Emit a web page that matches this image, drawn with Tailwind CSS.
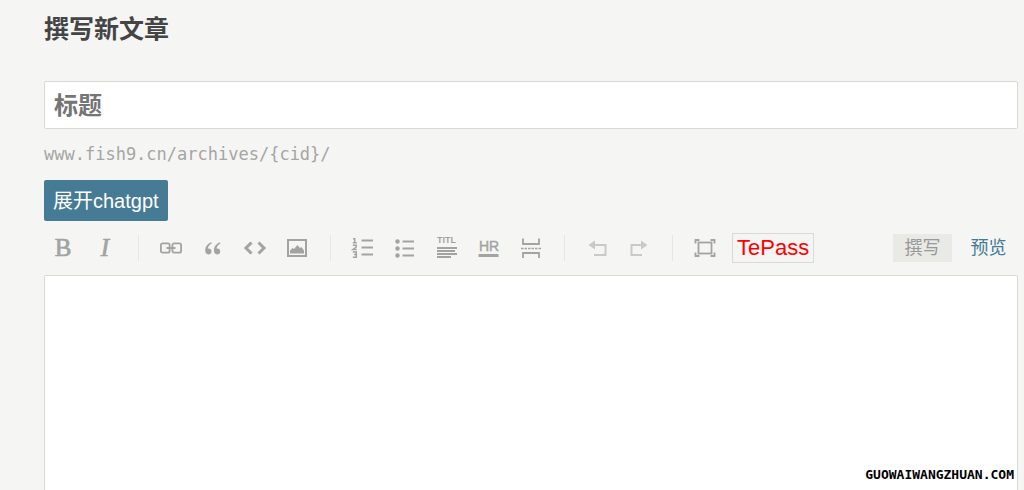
<!DOCTYPE html>
<html lang="zh-CN">
<head>
    <meta charset="UTF-8">
    <meta name="viewport" content="width=device-width, initial-scale=1.0">
    <title>撰写新文章</title>
    <script src="https://cdn.jsdelivr.net/npm/@tailwindcss/browser@4"></script>
</head>
<body class="bg-[#f5f5f3] font-['Liberation_Sans','Noto_Sans_CJK_SC',sans-serif]">
    <main class="relative flex flex-col h-screen overflow-hidden pl-11 pr-1.5 pt-3">
        <h1 class="text-[25px] leading-[34px] font-bold text-[#444]">撰写新文章</h1>

        <form class="flex flex-col flex-1 mt-[35px]">
            <input id="title" type="text" aria-label="标题" placeholder="标题" class="w-full h-12 px-[9px] pt-0.5 bg-white border border-[#d9d9d6] rounded-xs text-2xl font-bold placeholder:text-[#757575]">

            <p class="mt-3 text-[17px] leading-[26px] text-[#a5a5a3] font-['DejaVu_Sans_Mono',monospace]">www.fish9.cn/archives/{cid}/</p>

            <div class="mt-[13px]">
                <button type="button" class="h-[41px] px-[9px] bg-[#467b96] rounded-xs text-xl leading-6 text-white">展开chatgpt</button>
            </div>

            <div class="flex items-center justify-between mt-3 h-[30px]">
                <div class="flex items-center gap-1 text-[#a3a3a1]">
                    <button type="button" title="加粗" class="flex justify-center w-[38px]">
                        <svg class="w-6 h-6 font-['Liberation_Serif',serif]" viewBox="0 0 24 24" fill="currentColor" stroke="currentColor" stroke-width=".7" text-anchor="middle">
                            <text x="12" y="20" font-size="25">B</text>
                        </svg>
                    </button>
                    <button type="button" title="斜体" class="flex justify-center w-[38px]">
                        <svg class="w-6 h-6 font-['Liberation_Serif',serif]" viewBox="0 0 24 24" fill="currentColor" stroke="currentColor" stroke-width=".7" text-anchor="middle">
                            <text x="12" y="20" font-size="25" font-style="italic">I</text>
                        </svg>
                    </button>
                    <span class="flex justify-center w-5"><span class="w-px h-[26px] bg-[#e6e6e3]"></span></span>
                    <button type="button" title="链接" class="flex justify-center w-[38px]">
                        <svg class="w-6 h-6" viewBox="0 0 24 24" fill="none" stroke="currentColor" stroke-width="1.8">
                            <path d="M10.600 9.500V9A1.700 1.700 0 0 0 8.900 7.300H3.600A1.700 1.700 0 0 0 1.900 9v6a1.700 1.700 0 0 0 1.700 1.700h5.300A1.700 1.700 0 0 0 10.600 15V9"/>
                            <path d="M13.400 9.500V9a1.700 1.700 0 0 1 1.700-1.700h5.300A1.700 1.700 0 0 1 22.100 9v6a1.700 1.700 0 0 1-1.700 1.700h-5.300a1.700 1.700 0 0 1-1.700-1.700V9M7.500 12h9"/>
                        </svg>
                    </button>
                    <button type="button" title="引用" class="flex justify-center w-[38px]">
                        <svg class="w-6 h-6" viewBox="0 0 24 24" fill="currentColor">
                            <path d="M10.500 6.300C6.500 7.600 4.200 10.800 4.200 14.600c0 2.300 1.200 3.800 3.200 3.800 1.800 0 3.100-1.200 3.100-3 0-1.700-1.100-2.800-2.700-2.900-.4 0-.7 0-1 .2.300-2.200 1.500-4 3.900-5.300zM19.200 6.300c-4 1.300-6.300 4.500-6.300 8.300 0 2.300 1.200 3.800 3.200 3.800 1.800 0 3.100-1.200 3.100-3 0-1.700-1.100-2.800-2.700-2.900-.4 0-.7 0-1 .2.300-2.200 1.500-4 3.900-5.300z"/>
                        </svg>
                    </button>
                    <button type="button" title="代码" class="flex justify-center w-[38px]">
                        <svg class="w-6 h-6" viewBox="0 0 24 24" fill="none" stroke="currentColor" stroke-width="3">
                            <path d="M8.500 6.500L3 12l5.500 5.500M15.500 6.500L21 12l-5.500 5.500"/>
                        </svg>
                    </button>
                    <button type="button" title="图片" class="flex justify-center w-[38px]">
                        <svg class="w-6 h-6" viewBox="0 0 24 24">
                            <rect x="3" y="4" width="18" height="16" fill="none" stroke="currentColor" stroke-width="2"/>
                            <path d="M5 17.500v-3l2.500-2.500 1.500 1 3.500-4 2.500 3 1.500-1 2.500 3.500v3z" fill="currentColor"/>
                        </svg>
                    </button>
                    <span class="flex justify-center w-5"><span class="w-px h-[26px] bg-[#e6e6e3]"></span></span>
                    <button type="button" title="数字列表" class="flex justify-center w-[38px]">
                        <svg class="w-6 h-6" viewBox="0 0 24 24" fill="none" stroke="currentColor">
                            <path d="M10.500 4.500H22M10.500 11.500H22M10.500 18.500H22" stroke-width="2"/>
                            <path d="M2 2.700h1.700v4M1.800 6.700h4M1.800 9.200h3.400v1.800L2 13.500h3.700M1.800 16h3.500v2.500H3M5.300 18.500v2.700H1.800" stroke-width="1.500"/>
                        </svg>
                    </button>
                    <button type="button" title="普通列表" class="flex justify-center w-[38px]">
                        <svg class="w-6 h-6" viewBox="0 0 24 24" fill="currentColor">
                            <circle cx="4.500" cy="5.500" r="2.200"/><circle cx="4.500" cy="12.500" r="2.200"/><circle cx="4.500" cy="19.500" r="2.200"/>
                            <path d="M9.500 4.500H21v2H9.500zM9.500 11.500H21v2H9.500zM9.500 18.500H21v2H9.500z"/>
                        </svg>
                    </button>
                    <button type="button" title="标题" class="flex justify-center w-[38px]">
                        <svg class="w-6 h-6" viewBox="0 0 24 24" fill="currentColor">
                            <text x="2" y="7" font-size="9" font-weight="bold">TITL</text>
                            <path d="M2 11h20v2H2zM2 14h18v2H2zM2 17h20v2H2zM2 20h14v2H2z"/>
                        </svg>
                    </button>
                    <button type="button" title="分割线" class="flex justify-center w-[38px]">
                        <svg class="w-6 h-6" viewBox="0 0 24 24" fill="currentColor" text-anchor="middle">
                            <text x="12" y="15" font-size="14" stroke="currentColor" stroke-width=".4">HR</text>
                            <path d="M1.500 18h20v3h-20z"/>
                        </svg>
                    </button>
                    <button type="button" title="摘要分割线" class="flex justify-center w-[38px]">
                        <svg class="w-6 h-6" viewBox="0 0 24 24" fill="none" stroke="currentColor">
                            <path d="M4 2.500v5.500h16V2.500M4 22v-5h16v5" stroke-width="1.800"/>
                            <path d="M2 12.500h20" stroke-width="1.500" stroke-dasharray="2.500 1"/>
                        </svg>
                    </button>
                    <span class="flex justify-center w-5"><span class="w-px h-[26px] bg-[#e6e6e3]"></span></span>
                    <button type="button" title="撤销" class="flex justify-center w-[38px] text-[#c9c9c7]">
                        <svg class="w-6 h-6" viewBox="0 0 24 24">
                            <path d="M10 4.500v9L3.500 9z" fill="currentColor"/>
                            <path d="M9 9h11.500v10H9" fill="none" stroke="currentColor" stroke-width="2"/>
                        </svg>
                    </button>
                    <button type="button" title="重做" class="flex justify-center w-[38px] text-[#c9c9c7]">
                        <svg class="w-6 h-6" viewBox="0 0 24 24">
                            <path d="M14 4.500v9L20.500 9z" fill="currentColor"/>
                            <path d="M15 9H4.500v10H15" fill="none" stroke="currentColor" stroke-width="2"/>
                        </svg>
                    </button>
                    <span class="flex justify-center w-5"><span class="w-px h-[26px] bg-[#e6e6e3]"></span></span>
                    <button type="button" title="全屏" class="flex justify-center w-[38px]">
                        <svg class="w-6 h-6" viewBox="0 0 24 24" fill="none" stroke="currentColor" stroke-width="1.800">
                            <rect x="5.500" y="6.500" width="13" height="11"/>
                            <path d="M2.500 7.500v-3.500h4M17.500 4h4v3.500M21.500 16.500V20h-4M6.500 20h-4v-3.500"/>
                        </svg>
                    </button>
                    <button type="button" class="ml-1 h-[30px] px-1 border border-[#d9d9d6] text-[22px] leading-7 text-[#f00]">TePass</button>
                </div>

                <div class="flex gap-[7px] text-lg leading-7">
                    <a href="#text" class="w-[59px] h-7 bg-[#e9e9e6] text-center text-[#999]">撰写</a>
                    <a href="#preview" class="w-[59px] h-7 text-center text-[#467b96]">预览</a>
                </div>
            </div>

            <textarea id="text" aria-label="文章内容" class="flex-1 w-full mt-3 p-2 bg-white border border-b-0 border-[#d9d9d6] rounded-t-xs resize-none"></textarea>
        </form>

        <p class="absolute right-2.5 bottom-1.5 text-[13px] leading-[18px] font-bold text-black font-['DejaVu_Sans_Mono',monospace]">GUOWAIWANGZHUAN.COM</p>
    </main>
</body>
</html>
